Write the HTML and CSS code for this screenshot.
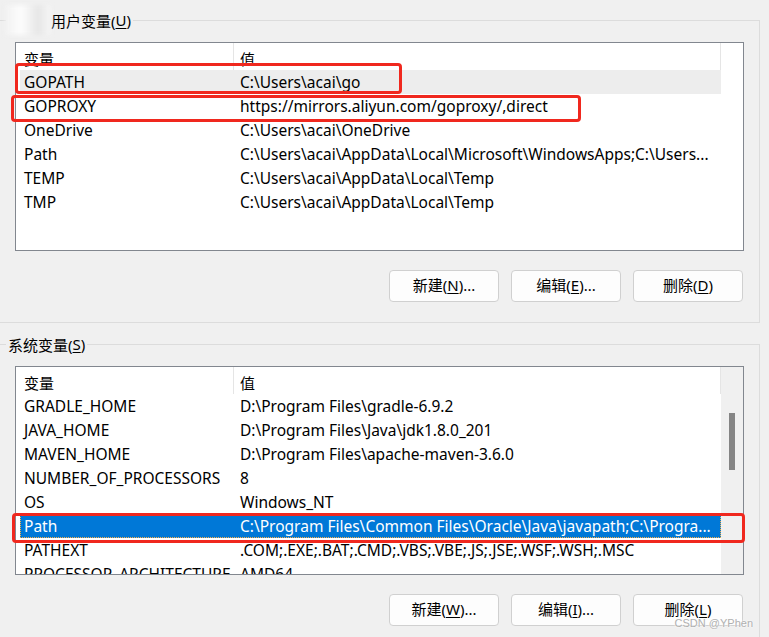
FILE: index.html
```html
<!DOCTYPE html>
<html lang="zh-CN">
  <head>
    <meta charset="UTF-8" />
    <meta name="viewport" content="width=device-width, initial-scale=1.0" />
    <title>环境变量</title>
    <link rel="stylesheet" href="styles.css">
  </head>
  <body>
    <!-- 用户变量 -->
    <div class="group">
      <div class="group-title"><span class="smudge"></span>用户变量(<u>U</u>)</div>
      <div class="list">
        <div class="list-body">
          <div class="rows">
            <div class="list-head">
              <span class="head-name">变量</span>
              <span class="head-value">值</span>
            </div>
            <div class="row inactive">
              <span class="name">GOPATH</span>
              <span class="value">C:\Users\acai\go</span>
            </div>
            <div class="row">
              <span class="name">GOPROXY</span>
              <span class="value">https://mirrors.aliyun.com/goproxy/,direct</span>
            </div>
            <div class="row">
              <span class="name">OneDrive</span>
              <span class="value">C:\Users\acai\OneDrive</span>
            </div>
            <div class="row">
              <span class="name">Path</span>
              <span class="value">C:\Users\acai\AppData\Local\Microsoft\WindowsApps;C:\Users...</span>
            </div>
            <div class="row">
              <span class="name">TEMP</span>
              <span class="value">C:\Users\acai\AppData\Local\Temp</span>
            </div>
            <div class="row">
              <span class="name">TMP</span>
              <span class="value">C:\Users\acai\AppData\Local\Temp</span>
            </div>
          </div>
        </div>
        <div class="mark mark-gopath"></div>
        <div class="mark mark-goproxy"></div>
      </div>
      <div class="actions">
        <button>新建(<u>N</u>)...</button>
        <button>编辑(<u>E</u>)...</button>
        <button>删除(<u>D</u>)</button>
      </div>
    </div>

    <!-- 系统变量 -->
    <div class="group">
      <div class="group-title">系统变量(<u>S</u>)</div>
      <div class="list">
        <div class="list-body">
          <div class="rows">
            <div class="list-head">
              <span class="head-name">变量</span>
              <span class="head-value">值</span>
            </div>
            <div class="row">
              <span class="name">GRADLE_HOME</span>
              <span class="value">D:\Program Files\gradle-6.9.2</span>
            </div>
            <div class="row">
              <span class="name">JAVA_HOME</span>
              <span class="value">D:\Program Files\Java\jdk1.8.0_201</span>
            </div>
            <div class="row">
              <span class="name">MAVEN_HOME</span>
              <span class="value">D:\Program Files\apache-maven-3.6.0</span>
            </div>
            <div class="row">
              <span class="name">NUMBER_OF_PROCESSORS</span>
              <span class="value">8</span>
            </div>
            <div class="row">
              <span class="name">OS</span>
              <span class="value">Windows_NT</span>
            </div>
            <div class="row selected">
              <span class="name">Path</span>
              <span class="value">C:\Program Files\Common Files\Oracle\Java\javapath;C:\Progra...</span>
            </div>
            <div class="row">
              <span class="name">PATHEXT</span>
              <span class="value">.COM;.EXE;.BAT;.CMD;.VBS;.VBE;.JS;.JSE;.WSF;.WSH;.MSC</span>
            </div>
            <div class="row">
              <span class="name">PROCESSOR_ARCHITECTURE</span>
              <span class="value">AMD64</span>
            </div>
          </div>
          <div class="scrollbar"><div class="thumb"></div></div>
        </div>
        <div class="mark mark-path"></div>
      </div>
      <div class="actions">
        <button>新建(<u>W</u>)...</button>
        <button>编辑(<u>I</u>)...</button>
        <button>删除(<u>L</u>)</button>
      </div>
    </div>

    <div class="watermark">CSDN @YPhen</div>
  </body>
</html>
```

FILE: styles.css
```css
body {
  margin: 0;
  padding-top: 20px;
  height: 637px;
  box-sizing: border-box;
  overflow: hidden;
  position: relative;
  background: #f0f0f0;
  color: #000;
  font-family: 'Noto Sans', 'Noto Sans CJK SC', sans-serif;
  font-size: 15px;
}
u {
  text-underline-offset: 2px;
}
.group {
  position: relative;
  margin-left: -20px;
  width: 780px;
  box-sizing: border-box;
  border: 1px solid #dcdcdc;
  padding: 21px 15px 20px 34px;
}
.group + .group {
  margin-top: 21px;
}
.group-title {
  position: absolute;
  top: -11px;
  left: 25px;
  height: 20px;
  padding: 0 2px;
  display: flex;
  align-items: center;
  background: #f0f0f0;
  white-space: nowrap;
}
.smudge {
  width: 46px;
  height: 30px;
  margin-left: -3px;
  flex: none;
  background: linear-gradient(90deg, #f1f1f1, #fdfdfd 35%, #e6e6e6 72%, #f6f6f6);
  filter: blur(2px);
}
.list {
  position: relative;
  height: 207px;
  border: 1px solid #82878f;
  background: #fff;
}
.list-body {
  display: flex;
  height: 100%;
  overflow: hidden;
}
.rows {
  width: 705px;
  flex: none;
  font-size: 15.5px;
}
.list-head {
  display: flex;
  height: 27px;
  font-size: 15px;
}
.head-name {
  width: 209px;
  padding: 4px 0 0 8px;
  line-height: 24px;
}
.head-value {
  flex: 1;
  padding: 4px 0 0 6px;
  line-height: 24px;
  border-left: 1px solid #e5e5e5;
  border-right: 1px solid #e5e5e5;
}
.row {
  display: flex;
  height: 24px;
  line-height: 25px;
  margin-left: 4px;
  white-space: nowrap;
}
.row .name {
  width: 209px;
  padding-left: 4px;
  flex: none;
}
.row .value {
  flex: 1;
  padding-left: 7px;
  overflow: hidden;
  text-overflow: ellipsis;
}
.row.inactive {
  background: #ededed;
}
.row.selected {
  background: #0078d7;
  color: #fff;
  outline: 1px dotted #f5b04a;
  outline-offset: -1px;
}
.scrollbar {
  flex: 1;
  background: #f0f0f0;
}
.thumb {
  width: 6px;
  height: 57px;
  margin: 46px 0 0 8px;
  background: #858585;
}
.mark {
  position: absolute;
  box-sizing: border-box;
  border: 3px solid #f0281e;
  border-radius: 4px;
}
.mark-gopath {
  left: -1px;
  top: 20px;
  width: 387px;
  height: 31px;
}
.mark-goproxy {
  left: -5px;
  top: 52px;
  width: 570px;
  height: 27px;
}
.mark-path {
  left: -4px;
  top: 146px;
  width: 733px;
  height: 30px;
}
.actions {
  display: flex;
  justify-content: flex-end;
  gap: 12px;
  margin-top: 19px;
  padding-right: 1px;
}
button {
  width: 110px;
  height: 32px;
  padding: 0 0 3px;
  border: 1px solid #d0d0d0;
  border-radius: 4px;
  background: #fdfdfd;
  color: #000;
  font-family: inherit;
  font-size: 15px;
}
.watermark {
  position: absolute;
  right: 16px;
  bottom: 8px;
  font-family: 'Liberation Sans', sans-serif;
  font-size: 11px;
  color: #b0b0b0;
  text-shadow: 0 0 2px #fff, 0 0 2px #fff;
}
```
